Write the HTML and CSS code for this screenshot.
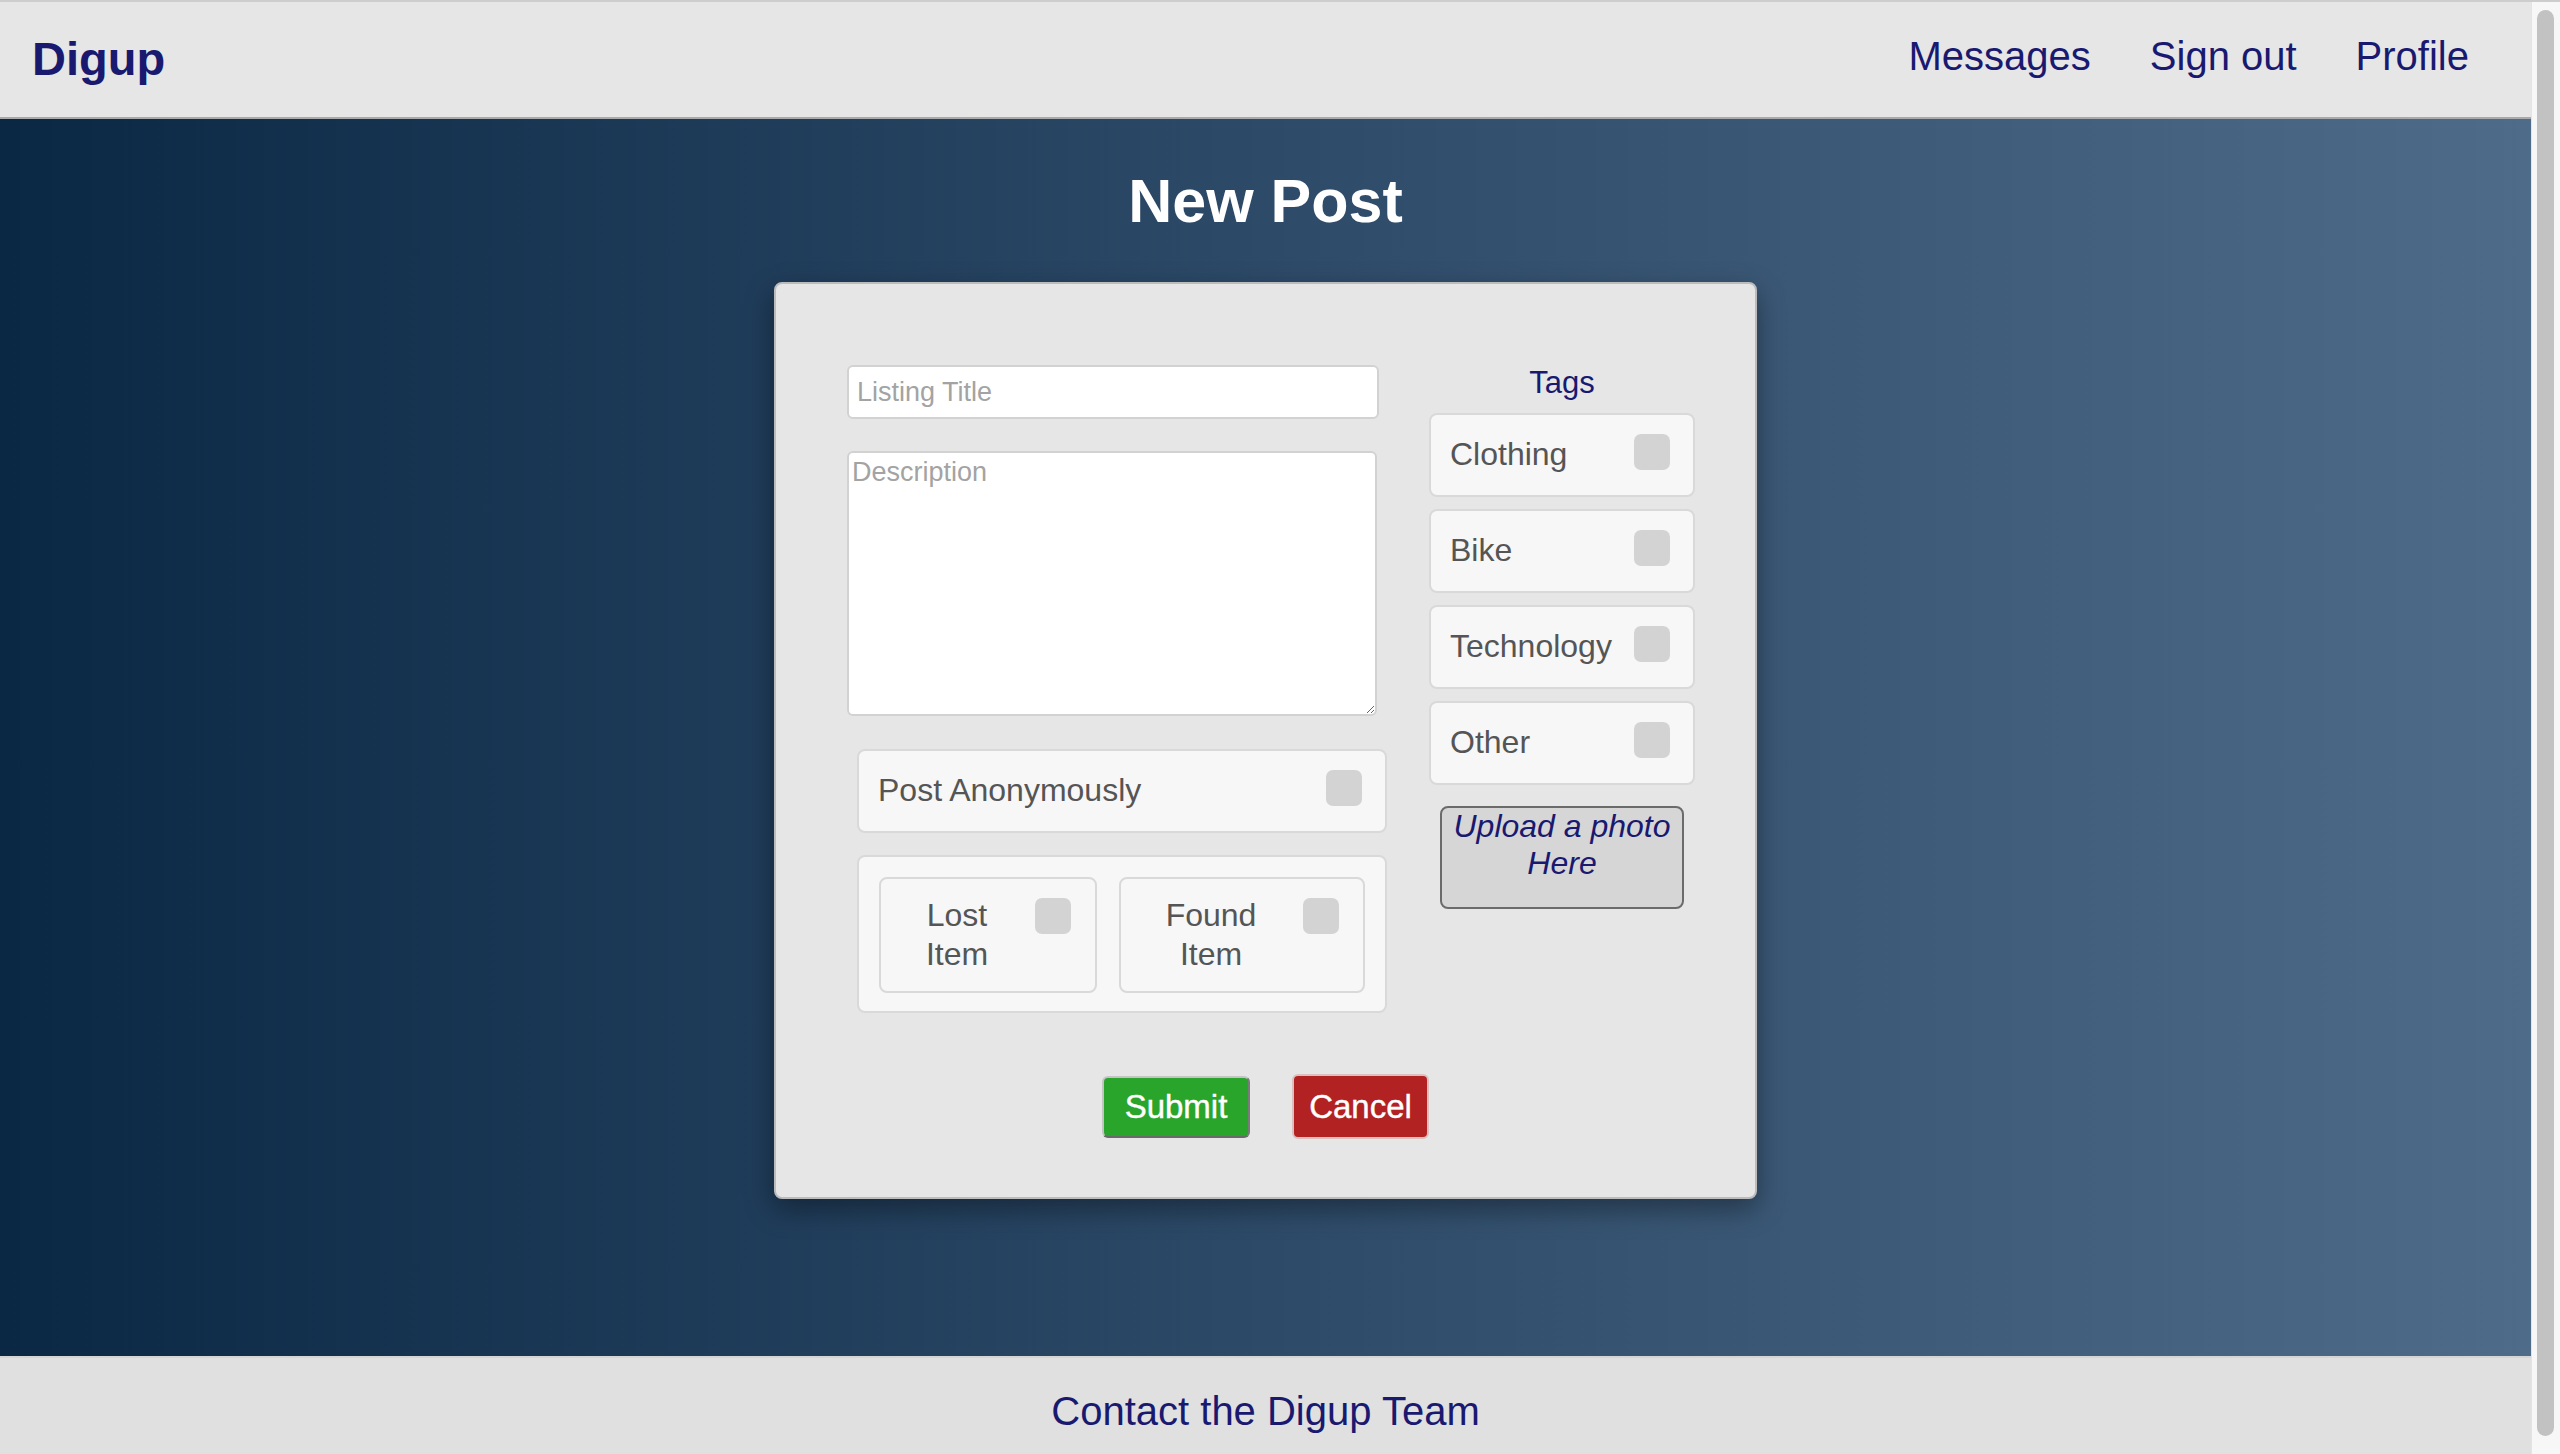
FILE: index.html
```html
<!DOCTYPE html>
<html lang="en">
<head>
<meta charset="utf-8">
<title>Digup - New Post</title>
<link rel="stylesheet" href="styles.css">
</head>
<body>
<div class="screen">
  <div class="page">
    <header class="navbar">
      <a class="logo" href="#">Digup</a>
      <nav class="links">
        <a href="#">Messages</a>
        <a href="#">Sign out</a>
        <a href="#">Profile</a>
      </nav>
    </header>
    <main class="hero">
      <h1 class="title">New Post</h1>
      <form class="card">
        <div class="columns">
          <div class="left-col">
            <input class="text-input" type="text" placeholder="Listing Title">
            <textarea class="text-area" placeholder="Description"></textarea>
            <div class="check-row anon">
              <span class="check-label">Post Anonymously</span>
              <input class="tick" type="checkbox">
            </div>
            <div class="lf-group">
              <div class="lf-box lost">
                <span class="lf-label">Lost Item</span>
                <input class="tick lf-tick" type="checkbox">
              </div>
              <div class="lf-box found">
                <span class="lf-label">Found Item</span>
                <input class="tick lf-tick" type="checkbox">
              </div>
            </div>
          </div>
          <div class="right-col">
            <div class="tags-title">Tags</div>
            <div class="check-row tag">
              <span class="check-label">Clothing</span>
              <input class="tick" type="checkbox">
            </div>
            <div class="check-row tag">
              <span class="check-label">Bike</span>
              <input class="tick" type="checkbox">
            </div>
            <div class="check-row tag">
              <span class="check-label">Technology</span>
              <input class="tick" type="checkbox">
            </div>
            <div class="check-row tag">
              <span class="check-label">Other</span>
              <input class="tick" type="checkbox">
            </div>
            <label class="upload">Upload a photo Here</label>
          </div>
        </div>
        <div class="actions">
          <button class="btn submit" type="button">Submit</button>
          <button class="btn cancel" type="button">Cancel</button>
        </div>
      </form>
    </main>
    <footer class="footer">Contact the Digup Team</footer>
  </div>
  <div class="scrollbar"><div class="thumb"></div></div>
</div>
</body>
</html>
```

FILE: styles.css
```css
html, body {
  margin: 0;
  padding: 0;
  height: 1454px;
  overflow: hidden;
}

body {
  font-family: "Liberation Sans", Arial, Helvetica, sans-serif;
  background: #e0e0e0;
}

.screen {
  display: flex;
  height: 1454px;
  box-sizing: border-box;
  border-top: 2px solid #cdcdcd;
  overflow: hidden;
}

.page {
  flex: 1;
  min-width: 0;
  display: flex;
  flex-direction: column;
}

/* ---------- navbar ---------- */
.navbar {
  display: flex;
  align-items: flex-start;
  justify-content: space-between;
  height: 115px;
  background: #e6e6e6;
  border-bottom: 2px solid #a9a9a9;
  flex: none;
}

.logo {
  margin: 30px 0 0 32px;
  font-size: 47px;
  line-height: 54px;
  font-weight: bold;
  color: #191970;
  text-decoration: none;
}

.links {
  display: flex;
  gap: 59px;
  margin-top: 30px;
  padding-right: 62px;
}

.links a {
  font-size: 40px;
  line-height: 48px;
  color: #191970;
  text-decoration: none;
}

/* ---------- hero ---------- */
.hero {
  flex: none;
  background: linear-gradient(to right, #0a2744 0%, #2d4a68 50%, #4e6c8a 100%);
  padding: 46px 0 157px;
}

.title {
  margin: 0 0 45px;
  text-align: center;
  color: #ffffff;
  font-size: 61px;
  line-height: 72px;
  font-weight: bold;
}

.card {
  width: 983px;
  box-sizing: border-box;
  margin: 0 auto;
  background: #e6e6e6;
  border: 2px solid #bcbcbc;
  border-radius: 8px;
  box-shadow: 0 10px 28px rgba(0, 0, 0, 0.38);
  padding: 81px 60px 58px 71px;
}

.columns {
  display: flex;
  gap: 42px;
  align-items: flex-start;
}

.left-col {
  width: 540px;
  display: flex;
  flex-direction: column;
}

.right-col {
  width: 266px;
  display: flex;
  flex-direction: column;
  align-items: center;
}

.text-input {
  width: 532px;
  height: 54px;
  box-sizing: border-box;
  margin: 0;
  padding: 0 8px;
  border: 2px solid #d2d2d2;
  border-radius: 6px;
  background: #ffffff;
  font-family: "Liberation Sans", Arial, sans-serif;
  font-size: 27px;
  color: #333;
  outline: none;
}

.text-area {
  width: 530px;
  height: 265px;
  box-sizing: border-box;
  margin: 32px 0 0;
  padding: 4px 3px;
  border: 2px solid #d2d2d2;
  border-radius: 6px;
  background: #ffffff;
  font-family: "Liberation Sans", Arial, sans-serif;
  font-size: 27px;
  line-height: 31px;
  color: #333;
  outline: none;
}

.text-input::placeholder,
.text-area::placeholder {
  color: #a3a3a3;
}

/* ---------- checkbox rows ---------- */
.check-row {
  display: flex;
  align-items: center;
  box-sizing: border-box;
  height: 84px;
  padding: 0 23px 3px 19px;
  background: #f7f7f7;
  border: 2px solid #d9d9d9;
  border-radius: 8px;
}

.check-label {
  flex: 1;
  font-size: 32px;
  line-height: 38px;
  color: #555555;
}

.tick {
  -webkit-appearance: none;
  appearance: none;
  flex: none;
  width: 36px;
  height: 36px;
  margin: 19px 0 0 0;
  align-self: flex-start;
  background: #d3d3d3;
  border: none;
  border-radius: 7px;
}

.anon {
  width: 530px;
  margin: 33px 0 0 10px;
}

.tag {
  width: 266px;
  margin-top: 12px;
}

.tags-title {
  font-size: 31px;
  line-height: 36px;
  color: #191970;
  text-align: center;
}

.upload {
  display: block;
  width: 244px;
  height: 103px;
  box-sizing: border-box;
  margin-top: 21px;
  padding: 0 10px;
  background: #d6d6d6;
  border: 2px solid #6b6b6b;
  border-radius: 8px;
  font-size: 32px;
  line-height: 37px;
  font-style: italic;
  color: #191970;
  text-align: center;
}

/* ---------- lost / found ---------- */
.lf-group {
  display: flex;
  gap: 22px;
  width: 530px;
  box-sizing: border-box;
  margin: 22px 0 0 10px;
  padding: 20px 20px 18px;
  background: #f7f7f7;
  border: 2px solid #d9d9d9;
  border-radius: 8px;
}

.lf-box {
  display: flex;
  align-items: center;
  box-sizing: border-box;
  height: 116px;
  padding: 0 24px 0 19px;
  background: #f7f7f7;
  border: 2px solid #d9d9d9;
  border-radius: 8px;
}

.lost { width: 218px; }
.found { width: 246px; }

.lf-label {
  flex: 1;
  min-width: 0;
  text-align: center;
  font-size: 32px;
  line-height: 39px;
  color: #555555;
}

.lf-tick {
  margin-left: 21px;
}

/* ---------- buttons ---------- */
.actions {
  display: flex;
  justify-content: center;
  align-items: center;
  gap: 42px;
  margin: 61px 0 0 -11px;
  height: 65px;
}

.btn {
  box-sizing: border-box;
  margin: 0;
  padding: 0;
  font-family: "Liberation Sans", Arial, sans-serif;
  font-size: 33px;
  color: #ffffff;
  border-radius: 6px;
  cursor: pointer;
  -webkit-text-stroke: 0.4px #ffffff;
}

.submit {
  width: 148px;
  height: 62px;
  background: #29a52c;
  border: 2px solid;
  border-color: #c4c4c4 #7a7a7a #6a6a6a #c4c4c4;
}

.cancel {
  width: 137px;
  height: 65px;
  background: #b22222;
  border: 2px solid #dcc0c0;
}

/* ---------- footer ---------- */
.footer {
  flex: none;
  background: #e0e0e0;
  border-top: 2px solid #d5d5d5;
  padding: 29px 0 40px;
  text-align: center;
  font-size: 40px;
  line-height: 48px;
  color: #191970;
}

/* ---------- scrollbar strip ---------- */
.scrollbar {
  flex: none;
  width: 29px;
  box-sizing: border-box;
  background: #f7f7f7;
  border-left: 1px solid #e4e4e4;
  padding: 8px 0 0 5px;
}

.thumb {
  width: 17px;
  height: 1426px;
  background: #c2c2c2;
  border-radius: 9px;
}
```
